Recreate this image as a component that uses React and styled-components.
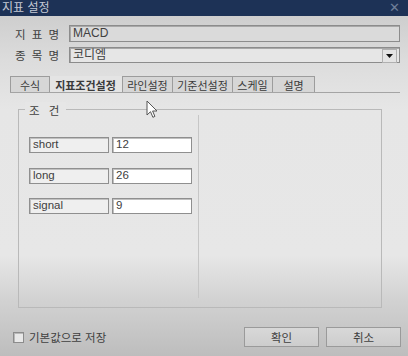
import React from 'react'
import styled, { createGlobalStyle } from 'styled-components'

const GlobalStyle = createGlobalStyle`
  html, body {
    margin: 0;
    padding: 0;
  }
  body {
    font-family: "Liberation Sans", "Noto Sans CJK KR", sans-serif;
    font-size: 12px;
    color: #3a3a3a;
  }
`

const Window = styled.div`
  position: relative;
  width: 408px;
  height: 356px;
  display: flex;
  flex-direction: column;
  overflow: hidden;
  background: linear-gradient(
    to bottom,
    #c9c9c9 0px,
    #dcdcdc 60px,
    #e6e6e6 110px,
    #e7e7e7 255px,
    #d2d2d2 300px,
    #bdbdbd 356px
  );
`

const TitleBar = styled.div`
  height: 16px;
  flex: none;
  background: #1d3256;
  display: flex;
  align-items: center;
  justify-content: space-between;
  padding: 0 8px 0 2px;
  color: #c3c9d4;
  font-size: 12px;
  line-height: 16px;
`

const CloseMark = styled.span`
  color: #6f7f99;
  font-size: 13px;
`

const FormRow = styled.div`
  display: flex;
  align-items: center;
  margin: ${p => p.$top}px 8px 0 15px;
  height: ${p => p.$h}px;
`

const Label = styled.div`
  width: 54px;
  flex: none;
  font-size: 11.5px;
  letter-spacing: 1.5px;
  color: #404040;
`

const TextBox = styled.div`
  flex: 1;
  height: 100%;
  box-sizing: border-box;
  border: 1px solid #8c8c8c;
  box-shadow: inset 1px 1px 0 #a8a8a8;
  background: ${p => p.$bg || '#dadada'};
  padding: 1px 0 0 3px;
  font-size: 12px;
  line-height: 13px;
  color: #404040;
  display: flex;
  align-items: flex-start;
`

const ComboText = styled.span`
  flex: 1;
`

const ComboButton = styled.div`
  width: 13px;
  height: 12px;
  margin: 0 2px 0 0;
  border: 1px solid #b0b0b0;
  background: #e4e4e4;
  display: flex;
  align-items: center;
  justify-content: center;
`

const Tabs = styled.div`
  display: flex;
  margin: 13px 8px 0 10px;
  border-bottom: 1px solid #a4a4a4;
  height: 16px;
`

const Tab = styled.div`
  width: ${p => p.$w}px;
  box-sizing: border-box;
  height: 16px;
  display: flex;
  align-items: center;
  justify-content: center;
  font-size: 11px;
  color: #3a3a3a;
  font-weight: ${p => (p.$active ? 700 : 400)};
  background: ${p => (p.$active ? '#e4e4e4' : '#d6d6d6')};
  border: 1px solid ${p => (p.$active ? 'transparent' : '#9c9c9c')};
  border-left-width: ${p => (p.$first || p.$afterActive ? 1 : 0)}px;
  border-bottom: none;
`

const Group = styled.div`
  position: relative;
  margin: 16px 0 0 18px;
  width: 364px;
  height: 199px;
  box-sizing: border-box;
  border: 1px solid #b9b9b9;
  display: flex;
  padding: 5px 0 9px 0;
`

const Legend = styled.span`
  position: absolute;
  top: -8px;
  left: 6px;
  padding: 0 4px;
  background: #e6e6e6;
  font-size: 11.5px;
  letter-spacing: 3px;
  color: #404040;
`

const LeftColumn = styled.div`
  width: 180px;
  border-right: 1px solid #c6c6c6;
  padding: 22px 0 0 10px;
  box-sizing: border-box;
  display: flex;
  flex-direction: column;
  gap: 14.5px;
`

const ParamRow = styled.div`
  display: flex;
  gap: 3px;
`

const ParamBox = styled.div`
  width: 80px;
  height: 16px;
  box-sizing: border-box;
  border: 1px solid #8f8f8f;
  box-shadow: inset 1px 1px 0 #c0c0c0;
  background: ${p => (p.$value ? '#ffffff' : '#efefef')};
  padding: 0 0 0 3px;
  font-size: 11.5px;
  line-height: 12px;
  color: #404040;
`

const Footer = styled.div`
  display: flex;
  align-items: center;
  margin: 19px 7px 0 13px;
  height: 20px;
`

const CheckLabel = styled.label`
  display: flex;
  align-items: center;
  gap: 5px;
  font-size: 11.5px;
  color: #404040;
  flex: 1;
`

const CheckBox = styled.span`
  width: 9px;
  height: 9px;
  border: 1px solid #8c8c8c;
  background: #e8e8e8;
  box-shadow: inset 1px 1px 0 #b8b8b8;
`

const Button = styled.button`
  width: 75px;
  height: 20px;
  margin-left: 7px;
  box-sizing: border-box;
  border: 1px solid #9a9a9a;
  background: linear-gradient(#d8d8d8, #cdcdcd);
  font-family: "Liberation Sans", "Noto Sans CJK KR", sans-serif;
  font-size: 11.5px;
  color: #404040;
  padding: 0;
`

const Cursor = styled.svg`
  position: absolute;
  left: 146px;
  top: 100px;
`

const tabs = [
  { label: '수식', w: 40 },
  { label: '지표조건설정', w: 72, active: true },
  { label: '라인설정', w: 51 },
  { label: '기준선설정', w: 60 },
  { label: '스케일', w: 40 },
  { label: '설명', w: 42 }
]

const params = [
  { name: 'short', value: '12' },
  { name: 'long', value: '26' },
  { name: 'signal', value: '9' }
]

const App = () => (
  <Window>
    <GlobalStyle />
    <TitleBar>
      <span>지표 설정</span>
      <CloseMark>✕</CloseMark>
    </TitleBar>
    <FormRow $top={9} $h={17}>
      <Label>지 표 명</Label>
      <TextBox>MACD</TextBox>
    </FormRow>
    <FormRow $top={5} $h={16}>
      <Label>종 목 명</Label>
      <TextBox $bg="#e6e6e6">
        <ComboText>코디엠</ComboText>
        <ComboButton>
          <svg width="7" height="4" viewBox="0 0 7 4">
            <path d="M0 0h7L3.5 4z" fill="#111" />
          </svg>
        </ComboButton>
      </TextBox>
    </FormRow>
    <Tabs>
      {tabs.map((t, i) => (
        <Tab
          key={t.label}
          $w={t.w}
          $active={t.active}
          $first={i === 0}
          $afterActive={i > 0 && tabs[i - 1].active}
        >
          {t.label}
        </Tab>
      ))}
    </Tabs>
    <Group>
      <Legend>조 건</Legend>
      <LeftColumn>
        {params.map(p => (
          <ParamRow key={p.name}>
            <ParamBox>{p.name}</ParamBox>
            <ParamBox $value>{p.value}</ParamBox>
          </ParamRow>
        ))}
      </LeftColumn>
    </Group>
    <Footer>
      <CheckLabel>
        <CheckBox />
        기본값으로 저장
      </CheckLabel>
      <Button>확인</Button>
      <Button>취소</Button>
    </Footer>
    <Cursor width="12" height="19" viewBox="0 0 12 19">
      <path d="M1 1v14l3.5-3.3 2.4 5.6 2-0.9-2.3-5.4H11z" fill="#fff" stroke="#555" strokeWidth="1" />
    </Cursor>
  </Window>
)

export default App
